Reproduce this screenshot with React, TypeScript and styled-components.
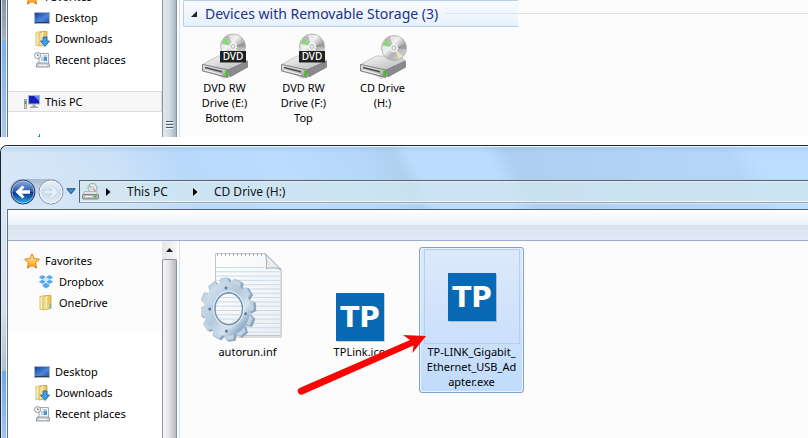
import React from "react";
import styled, { createGlobalStyle } from "styled-components";

const GlobalStyle = createGlobalStyle`
  * { box-sizing: border-box; }
  html, body, #root { margin: 0; height: 100%; }
  body {
    background: #fff;
    color: #000;
    font-family: "Noto Sans", "Open Sans", sans-serif;
    font-size: 11px;
    line-height: 15px;
    overflow: hidden;
  }
`;

const Screen = styled.div`
  display: flex;
  flex-direction: column;
  gap: 8px;
  min-height: 100%;
`;

const Pane = styled.section`
  display: flex;
  height: 137px;
  overflow: hidden;
`;

const Window = styled.section`
  display: flex;
  flex: 1;
  flex-direction: column;
  overflow: hidden;
  border-top: 1px solid #1b2430;
  border-left: 1px solid #1b2430;
  border-top-left-radius: 7px;
`;

const Body = styled.div`
  display: flex;
  flex: 1;
  min-height: 0;
`;

const GlassEdge = styled.div<{ $tone: "dark" | "light" }>`
  flex: none;
  width: ${(p) => (p.$tone === "dark" ? 7 : 6)}px;
  border-left: ${(p) => (p.$tone === "dark" ? "1px solid #1b2430" : "0")};
  box-shadow: inset 1px 0 #dcecfa, inset -1px 0 #e9f4fd;
  background: ${(p) =>
    p.$tone === "dark"
      ? "linear-gradient(#8794a3 0, #a4b1bf 40px, #7eb0ea 42px, #a9c8ec 100%)"
      : "linear-gradient(#d6e6f8 0, #d3dfec 100px, #b3bfcb 161px, #6fa5e8 163px, #a3c9f3 100%)"};
`;

const Client = styled.div`
  display: flex;
  flex: 1;
  min-width: 0;
  border-left: 1px solid #62717f;
`;

const Side = styled.nav<{ $end?: boolean }>`
  display: flex;
  flex: none;
  flex-direction: column;
  justify-content: ${(p) => (p.$end ? "flex-end" : "flex-start")};
  width: 154px;
  overflow: hidden;
  background: #fff;
`;

const SideGroup = styled.div<{ $shade?: boolean }>`
  display: flex;
  flex: none;
  flex-direction: column;
  padding: ${(p) => (p.$shade ? "9px 0 19px" : "0")};
  margin-bottom: ${(p) => (p.$shade ? 29 : 21)}px;
  background: ${(p) => (p.$shade ? "#fcfcfc" : "#fff")};
`;

const SideLink = styled.a<{ $indent: number; $current?: boolean }>`
  display: flex;
  flex: none;
  align-items: center;
  gap: 5px;
  height: 21px;
  padding-left: ${(p) => p.$indent}px;
  border: solid #dcdcdc;
  border-width: ${(p) => (p.$current ? "1px 1px 1px 0" : "0")};
  background: ${(p) => (p.$current ? "#f6f6f6" : "transparent")};
  color: #000;
  text-decoration: none;
  white-space: nowrap;
`;

const NextItem = styled.div`
  display: flex;
  flex: none;
  align-items: flex-end;
  height: 25px;
  padding-left: 28px;
`;

const Scroll = styled.div`
  display: flex;
  flex: none;
  flex-direction: column;
  width: 15px;
  background: #f0f0f0;
`;

const ScrollUp = styled.button`
  display: flex;
  align-items: center;
  justify-content: center;
  height: 18px;
  padding: 0;
  border: 0;
  background: linear-gradient(90deg, #e6e6e6, #f6f6f6);
`;

const Thumb = styled.div<{ $cut?: boolean }>`
  display: flex;
  flex: 1;
  align-items: flex-end;
  justify-content: center;
  padding-bottom: 7px;
  border: 1px solid #8a929b;
  border-width: ${(p) => (p.$cut ? "0 1px" : "1px 1px 0")};
  border-radius: ${(p) => (p.$cut ? "0" : "2px 2px 0 0")};
  background: ${(p) =>
    p.$cut
      ? "linear-gradient(90deg, #dfe8ee, #d2dce3 50%, #a9b5be)"
      : "linear-gradient(90deg, #f8f8f9, #e4e4e8 45%, #b9b9c1)"};
`;

const Main = styled.main`
  flex: 1;
  min-width: 0;
  margin-left: 2px;
  border-left: 1px solid #d3e1f1;
  background: #fcfcfc;
`;

const GroupHeader = styled.header`
  display: flex;
  align-items: center;
  margin-left: 3px;
`;

const GroupTitle = styled.h2`
  display: flex;
  align-items: center;
  gap: 8px;
  width: 335px;
  height: 27px;
  margin: 0;
  padding-left: 7px;
  border: solid #b4cfe8;
  border-width: 1px 0 1px 1px;
  border-radius: 2px 0 0 2px;
  background: linear-gradient(#f9fbfe, #f0f6fd 50%, #e6f1fc);
  color: #1e3287;
  font-size: 14px;
  font-weight: 400;
  line-height: 20px;
  white-space: nowrap;
`;

const Rule = styled.span`
  flex: 1;
  height: 1px;
  background: #dbe3ea;
`;

const DriveList = styled.div`
  display: flex;
  padding: 5px 0 0 5px;
`;

const Drive = styled.button`
  display: flex;
  flex-direction: column;
  align-items: center;
  width: 79px;
  padding: 0 10px;
  border: 0;
  background: none;
  color: #000;
  font: inherit;
`;

const TitleBar = styled.header`
  display: flex;
  flex: none;
  flex-direction: column;
  height: 63px;
  padding: 32px 0 6px 8px;
  border-top: 1px solid #eef7ff;
  background:
    linear-gradient(rgba(120, 165, 215, 0.25), rgba(255, 255, 255, 0) 6px),
    linear-gradient(62deg, #d9e8f8 0, #cde2f7 16%, #b9d9fa 24%, #bbdcfd 36%, #b5d7fa 46%, #b0d0ef 50%, #bbdcfd 52%, #bbdcfd 61%, #aecfef 64%, #b4d5f8 85%, #b4d5f8 90%, #bbddff 93%);
`;

const NavRow = styled.div`
  display: flex;
  align-items: center;
  height: 25px;
`;

const NavButtons = styled.div`
  display: flex;
  gap: 2px;
  height: 26px;
  padding-left: 1px;
  border-radius: 13px;
  background: linear-gradient(#a5bbd2, #d3e3f3 60%);
`;

const RoundButton = styled.button`
  display: flex;
  padding: 0;
  border: 0;
  background: none;
`;

const HistoryButton = styled(RoundButton)`
  margin: 0 3px 0 2px;
`;

const Address = styled.div`
  display: flex;
  flex: 1;
  align-items: center;
  height: 23px;
  padding-left: 2px;
  border: solid #53606c;
  border-width: 1px 0 1px 1px;
  border-bottom-color: #8fa0b0;
  background: rgba(211, 231, 239, 0.72);
  box-shadow: inset 0 1px #e2f1fa, inset 0 -1px #f3faff, 0 1px #d7e8f8;
`;

const Crumb = styled.button`
  padding: 0;
  border: 0;
  background: none;
  color: #101418;
  font: inherit;
  font-size: 12px;
  line-height: 20px;
`;

const CrumbArrow = styled.span<{ $before: number }>`
  display: flex;
  margin: 0 16px 0 ${(p) => p.$before}px;
`;

const CommandBar = styled.div`
  height: 32px;
  border-top: 1px solid #56646f;
  border-bottom: 1px solid #9badc8;
  background: linear-gradient(#fff, #e9f2fb 15px, #dbe5f2 15px, #dfe9f5 100%);
`;

const Column = styled.div`
  display: flex;
  flex: 1;
  flex-direction: column;
  min-width: 0;
`;

const Row = styled.div`
  display: flex;
  flex: 1;
  min-height: 0;
`;

const Files = styled.div`
  position: relative;
  display: flex;
  align-items: flex-start;
  gap: 8px;
  padding: 6px 0 0 15px;
`;

const File = styled.button<{ $selected?: boolean }>`
  display: flex;
  flex-direction: column;
  align-items: center;
  width: 105px;
  min-height: 146px;
  padding: 1px;
  border: 1px solid ${(p) => (p.$selected ? "#7da2ce" : "transparent")};
  border-radius: 3px;
  background: ${(p) => (p.$selected ? "linear-gradient(#dce9fb, #c1dbfc)" : "none")};
  box-shadow: ${(p) => (p.$selected ? "inset 0 0 0 1px #e9f2fd" : "none")};
  color: #000;
  font: inherit;

  & + & { margin-left: -1px; }
`;

const Preview = styled.span<{ $framed?: boolean }>`
  display: flex;
  align-items: ${(p) => (p.$framed ? "center" : "flex-end")};
  justify-content: center;
  width: 96px;
  height: 95px;
  padding-bottom: ${(p) => (p.$framed ? 0 : 1)}px;
  border: 1px solid ${(p) => (p.$framed ? "#b9cde8" : "transparent")};
`;

const Label = styled.span`
  white-space: pre-line;
  text-align: center;
`;

const Pointer = styled.svg`
  position: absolute;
  top: 88px;
  left: 114px;
  pointer-events: none;
`;

const Defs = styled.svg`
  position: absolute;
  width: 0;
  height: 0;
`;

const Gradients = () => (
  <Defs aria-hidden="true">
    <defs>
      <linearGradient id="screen" x1="0" y1="0" x2="1" y2="1">
        <stop offset="0" stopColor="#1a3f9c" />
        <stop offset=".6" stopColor="#4c86dc" />
        <stop offset="1" stopColor="#2a58b4" />
      </linearGradient>
      <linearGradient id="folder" x1="0" y1="0" x2="1" y2="0">
        <stop offset="0" stopColor="#f8e9a6" />
        <stop offset="1" stopColor="#dfbd55" />
      </linearGradient>
      <linearGradient id="star" x1="0" y1="0" x2="0" y2="1">
        <stop offset="0" stopColor="#fff3a0" />
        <stop offset="1" stopColor="#fb9a1d" />
      </linearGradient>
      <linearGradient id="metal" x1="0" y1="0" x2="1" y2="1">
        <stop offset="0" stopColor="#fafafa" />
        <stop offset="1" stopColor="#b4b4b6" />
      </linearGradient>
      <linearGradient id="front" x1="0" y1="0" x2="0" y2="1">
        <stop offset="0" stopColor="#ededef" />
        <stop offset="1" stopColor="#9a9a9e" />
      </linearGradient>
      <linearGradient id="disc" x1="0" y1="0" x2="1" y2="1">
        <stop offset="0" stopColor="#c9c9c9" />
        <stop offset=".4" stopColor="#f2f2f2" />
        <stop offset=".6" stopColor="#b2b2b2" />
        <stop offset="1" stopColor="#e3e3e3" />
      </linearGradient>
      <linearGradient id="paper" x1="0" y1="0" x2="1" y2="1">
        <stop offset="0" stopColor="#fff" />
        <stop offset="1" stopColor="#eceef1" />
      </linearGradient>
      <linearGradient id="gear" x1="0" y1="0" x2=".8" y2="1">
        <stop offset="0" stopColor="#dbe7f1" />
        <stop offset=".5" stopColor="#b3c9dc" />
        <stop offset=".75" stopColor="#d6e3ee" />
        <stop offset="1" stopColor="#6d93b5" />
      </linearGradient>
      <linearGradient id="back" x1="0" y1="0" x2="0" y2="1">
        <stop offset="0" stopColor="#8fb0e0" />
        <stop offset=".48" stopColor="#2c58ac" />
        <stop offset=".52" stopColor="#0d2f86" />
        <stop offset="1" stopColor="#2ab5f0" />
      </linearGradient>
      <linearGradient id="forward" x1="0" y1="0" x2="0" y2="1">
        <stop offset="0" stopColor="#eaf2fa" />
        <stop offset=".5" stopColor="#cfdeed" />
        <stop offset="1" stopColor="#dfeaf5" />
      </linearGradient>
    </defs>
  </Defs>
);

const StarIcon = () => (
  <svg width="16" height="16" viewBox="0 0 16 16">
    <path d="M8 .8l2.2 4.8 5.2.6-3.8 3.6 1 5.3L8 12.5l-4.6 2.6 1-5.3L.6 6.2l5.2-.6z" fill="url(#star)" stroke="#e07c1c" />
  </svg>
);

const DesktopIcon = () => (
  <svg width="16" height="16" viewBox="0 0 16 16">
    <rect x="0" y="2" width="16" height="12" fill="#a9b7c9" />
    <rect x="1" y="3" width="14" height="9" fill="url(#screen)" />
    <path d="M1 12.5h14" stroke="#2c3b50" />
    <path d="M1 13.5h2" stroke="#5dc3f0" />
  </svg>
);

const FolderShape = () => (
  <>
    <path d="M2 1.5l5-1v13l-5 1z" fill="#fbf1bd" stroke="#cfae52" strokeWidth=".8" />
    <path d="M5 2.5l3-2h5v13l-8 1.5z" fill="url(#folder)" stroke="#caa544" strokeWidth=".8" />
    <path d="M8.5 1v13" stroke="#fbf0bd" />
  </>
);

const DownloadsIcon = () => (
  <svg width="16" height="16" viewBox="0 0 16 16">
    <FolderShape />
    <path d="M9 6h4v4h2.6L11 15.5 6.4 10H9z" fill="#3ba0e6" stroke="#1767ae" strokeWidth=".8" />
  </svg>
);

const OneDriveIcon = () => (
  <svg width="16" height="16" viewBox="0 0 16 16">
    <FolderShape />
    <path d="M12.5 9v4" stroke="#69b5e8" strokeWidth="1.4" />
  </svg>
);

const RecentIcon = () => (
  <svg width="16" height="16" viewBox="0 0 16 16">
    <path d="M5 1.5h9.5v10H5z" fill="#f4f7fa" stroke="#a2a9b0" />
    <path d="M7 6h3M7 8h3M9 4h4" stroke="#8ea4ba" />
    <rect x="10" y="5" width="3" height="4" fill="#3e9ad6" />
    <path d="M3 11h12l.8 4H2z" fill="#c9cdd1" stroke="#8c9197" strokeWidth=".8" />
    <path d="M5 13.3h8" stroke="#fff" />
    <circle cx="3.6" cy="3.6" r="3" fill="#fff" stroke="#8d949b" />
    <path d="M3.6 1.8v2h1.6" fill="none" stroke="#4d5d70" strokeWidth=".8" />
  </svg>
);

const ComputerIcon = () => (
  <svg width="16" height="16" viewBox="0 0 16 16">
    <rect x=".5" y="5.5" width="2" height="9" fill="#d7dade" stroke="#8b9299" strokeWidth=".8" />
    <path d="M1.500 7v3" stroke="#35b52e" strokeWidth="1.4" />
    <rect x="4.5" y="1.5" width="11" height="8.5" fill="#1420bd" stroke="#aab2bd" />
    <path d="M10 2h5v5z" fill="#6a82ee" />
    <path d="M8.5 10.5h3v2H14v1.5H6v-1.500h2.500z" fill="#9fa8b2" />
  </svg>
);

const DropboxIcon = () => (
  <svg width="16" height="16" viewBox="0 0 16 16" fill="#56a8ec">
    <path d="M4.600 1L8 3.200 4.300 5.500.8 3.200zM11.400 1L8 3.200l3.700 2.300 3.500-2.300zM.8 7.800l3.500-2.300L8 7.800l-3.400 2.200zM15.200 7.800l-3.500-2.300L8 7.800l3.400 2.200zM4.600 10.800L8 8.700l3.400 2.100v1.400L8 14.500l-3.400-2.300z" />
    <path d="M4.300 5.500L8 3.200l3.700 2.300L8 7.800z" fill="#cfe7fb" />
  </svg>
);

const DriveIcon = ({ kind }: { kind: "DVD" | "CD" }) => {
  const cx = kind === "DVD" ? 32 : 35;
  const cy = kind === "DVD" ? 14.500 : 16;
  return (
    <svg width="48" height="48" viewBox="0 0 48 48">
      <path d="M3 37l20 10 24-11v-2z" fill="#000" opacity=".16" />
      <path d="M1.500 32.500L17 24h24l5.500 5L27 38z" fill="url(#metal)" stroke="#aaa" strokeWidth=".6" />
      <path d="M1.500 32.500L27 38v7.500L1.500 39z" fill="url(#front)" stroke="#6d6d70" strokeWidth=".8" />
      <path d="M27 38l19.500-9V35L29 45z" fill="#8b8b8f" stroke="#6d6d70" strokeWidth=".6" />
      <path d="M4 35.500l17 4.300" stroke="#4b4b50" strokeWidth="1.400" />
      <path d="M4 38l17 4.600" stroke="#f5f5f5" />
      <path d="M25.500 38.500v5.500" stroke="#3fc41c" strokeWidth="2.600" />
      <circle cx={cx} cy={cy} r="12.500" fill="url(#disc)" stroke="#9d9d9d" strokeWidth=".7" />
      <path d={`M${cx} ${cy}l-11.500-3 3-6z`} fill="#6ccf5a" opacity=".75" />
      <path d={`M${cx} ${cy}l-8.500-9 4-2.500z`} fill="#a8a8a8" opacity=".7" />
      <path d={`M${cx} ${cy}l11.500-4 .5 5z`} fill="#8d8d8d" opacity=".7" />
      <path d={`M${cx} ${cy}l9 8-4 3z`} fill="#f5e7b0" opacity=".8" />
      <circle cx={cx} cy={cy} r="3.600" fill="#d5d8da" stroke="#fff" />
      <circle cx={cx} cy={cy} r="1.500" fill="#fff" stroke="#9a9a9a" strokeWidth=".5" />
      {kind === "DVD" && (
        <>
          <rect x="19" y="19" width="26" height="11.500" fill="#202020" />
          <text x="32" y="28" textAnchor="middle" fill="#fff" fontFamily="Noto Sans, sans-serif" fontWeight="500" fontSize="10">
            DVD
          </text>
        </>
      )}
    </svg>
  );
};

const SmallDriveIcon = () => (
  <svg width="17" height="17" viewBox="0 0 17 17">
    <circle cx="10.500" cy="5" r="4.500" fill="#e3e6e8" stroke="#8d959c" strokeWidth=".8" />
    <path d="M10.500 5L6.500 4l1-2z" fill="#7ccf6a" />
    <path d="M10.500 5l3.500 2.500-1.500 1.500z" fill="#d98f86" />
    <circle cx="10.500" cy="5" r="1.200" fill="#fff" stroke="#8d959c" strokeWidth=".5" />
    <path d="M2.500 8.500h12l1.500 3H1z" fill="#e2e4e6" stroke="#9a9fa4" strokeWidth=".6" />
    <rect x=".5" y="11.500" width="16" height="4.500" rx="1" fill="#b9bdc1" stroke="#6c7277" strokeWidth=".8" />
    <path d="M3 13.500h7" stroke="#fff" />
    <path d="M12 13.500h2.500" stroke="#3fc41c" strokeWidth="2" />
  </svg>
);

const teeth = Array.from({ length: 12 }, (_, i) => i * 30);

const SettingsFileIcon = () => (
  <svg width="94" height="92" viewBox="0 0 94 92">
    <path d="M15 5h50l16 16v67H15z" fill="#000" opacity=".12" />
    <path d="M14.500 3.500H64l16 16v66H14.500z" fill="url(#paper)" stroke="#c2c6ca" />
    {Array.from({ length: 16 }, (_, i) => (
      <path key={i} d={`M15 ${17.500 + i * 4.300}h${i === 0 ? 48 : 64}`} stroke="#c7dbe9" />
    ))}
    <path d="M16 4.500h47" stroke="#8d9297" strokeDasharray="1 3" strokeWidth="2" />
    <path d="M64 3.500l16 16c-4-2-10-2-15-1 1-5 1-10-1-15z" fill="#e9ebed" stroke="#a6abb0" />
    <g transform="translate(28 60) scale(.86 1) rotate(-6)">
      {teeth.map((a) => (
        <path key={a} d="M-6-25l2-6h8l2 6z" transform={`rotate(${a})`} fill="#8aa8c2" stroke="#7d9bb5" strokeWidth=".8" />
      ))}
    </g>
    <g transform="translate(26 59) scale(.86 1) rotate(-6)">
      {teeth.map((a) => (
        <path key={a} d="M-6-25l2-6h8l2 6z" transform={`rotate(${a})`} fill="#c3d5e4" stroke="#a3bbd0" strokeWidth=".6" />
      ))}
      <path
        fillRule="evenodd"
        d="M0-27a27 27 0 1 1 0 54a27 27 0 1 1 0-54zM2-16a16 16 0 1 0 0 32a16 16 0 1 0 0-32z"
        fill="url(#gear)"
      />
      <circle cx="2" cy="0" r="16" fill="none" stroke="#7390ad" strokeWidth="1.600" />
      <circle cx="2" cy="0" r="17.500" fill="none" stroke="#e6eff6" />
      <g fill="#55789a">
        <circle cx="1" cy="-21" r="1.600" />
        <circle cx="21" cy="7" r="1.600" />
        <circle cx="-3" cy="22" r="1.600" />
        <circle cx="-20" cy="-2" r="1.600" />
      </g>
    </g>
  </svg>
);

const TpIcon = () => (
  <svg width="50" height="50" viewBox="0 0 50 50">
    <rect x="2" y="2" width="48" height="48" fill="#000" opacity=".18" />
    <rect x="1" y="1" width="48" height="48" fill="#0768b3" />
    <text x="25" y="35" textAnchor="middle" fill="#fff" fontFamily="DejaVu Sans, sans-serif" fontWeight="700" fontSize="28">
      TP
    </text>
  </svg>
);

const BackIcon = () => (
  <svg width="26" height="26" viewBox="0 0 26 26">
    <circle cx="13" cy="13" r="12" fill="url(#back)" stroke="#22385f" />
    <circle cx="13" cy="13" r="11" fill="none" stroke="#b5d0f2" opacity=".7" />
    <path d="M5.500 13l7-6.500 2 2-2.800 2.800H20v3.400h-8.300l2.800 2.800-2 2z" fill="#fff" />
  </svg>
);

const ForwardIcon = () => (
  <svg width="26" height="26" viewBox="0 0 26 26">
    <circle cx="13" cy="13" r="12" fill="url(#forward)" stroke="#7f91a6" />
    <circle cx="13" cy="13" r="11" fill="none" stroke="#f5faff" />
    <path d="M20.500 13l-7-6.500-2 2 2.800 2.800H6v3.400h8.300l-2.800 2.800 2 2z" fill="#e8f0f8" stroke="#bccddd" strokeWidth=".7" />
  </svg>
);

const HistoryIcon = () => (
  <svg width="10" height="7" viewBox="0 0 10 7">
    <path d="M.8.8h8.400L5 5.800z" fill="#3b9bd9" stroke="#17446e" />
  </svg>
);

const RightArrow = () => (
  <svg width="5" height="8" viewBox="0 0 5 8">
    <path d="M0 0l4.500 4L0 8z" fill="#000" />
  </svg>
);

const Places = () => (
  <>
    <SideLink href="#desktop" $indent={26}><DesktopIcon />Desktop</SideLink>
    <SideLink href="#downloads" $indent={26}><DownloadsIcon />Downloads</SideLink>
    <SideLink href="#recent" $indent={26}><RecentIcon />Recent places</SideLink>
  </>
);

const drives: { kind: "DVD" | "CD"; label: string }[] = [
  { kind: "DVD", label: "DVD RW\nDrive (E:)\nBottom" },
  { kind: "DVD", label: "DVD RW\nDrive (F:)\nTop" },
  { kind: "CD", label: "CD Drive\n(H:)" },
];

const ComputerPane = () => (
  <Pane aria-label="This PC">
    <GlassEdge $tone="dark" />
    <Client>
      <Side $end aria-label="Places">
        <SideGroup>
          <SideLink href="#favorites" $indent={16}><StarIcon />Favorites</SideLink>
          <Places />
        </SideGroup>
        <SideLink href="#this-pc" $indent={16} $current aria-current="page"><ComputerIcon />This PC</SideLink>
        <NextItem>
          <svg width="8" height="3" viewBox="0 0 8 3"><path d="M1 3l2-1V0h1v3z" fill="#1f9a63" /></svg>
        </NextItem>
      </Side>
      <Scroll>
        <Thumb $cut>
          <svg width="7" height="9" viewBox="0 0 7 9">
            <path d="M0 .5h7M0 3.500h7M0 6.500h7" stroke="#4d5860" />
            <path d="M0 1.500h7M0 4.500h7M0 7.500h7" stroke="#f4f8fa" />
          </svg>
        </Thumb>
      </Scroll>
      <Main>
        <GroupHeader>
          <GroupTitle>
            <svg width="6" height="6" viewBox="0 0 6 6"><path d="M6 0v6H0z" fill="#222" /></svg>
            Devices with Removable Storage (3)
            <Rule />
          </GroupTitle>
          <Rule />
        </GroupHeader>
        <DriveList>
          {drives.map((d) => (
            <Drive key={d.label}>
              <DriveIcon kind={d.kind} />
              <Label>{d.label}</Label>
            </Drive>
          ))}
        </DriveList>
      </Main>
    </Client>
  </Pane>
);

const DriveWindow = () => (
  <Window aria-label="CD Drive (H:)">
    <TitleBar>
      <NavRow>
        <NavButtons>
          <RoundButton aria-label="Back"><BackIcon /></RoundButton>
          <RoundButton aria-label="Forward"><ForwardIcon /></RoundButton>
        </NavButtons>
        <HistoryButton aria-label="Recent locations"><HistoryIcon /></HistoryButton>
        <Address>
          <SmallDriveIcon />
          <CrumbArrow $before={7}><RightArrow /></CrumbArrow>
          <Crumb>This PC</Crumb>
          <CrumbArrow $before={25}><RightArrow /></CrumbArrow>
          <Crumb>CD Drive (H:)</Crumb>
        </Address>
      </NavRow>
    </TitleBar>
    <Body>
      <GlassEdge $tone="light" />
      <Client>
        <Column>
          <CommandBar />
          <Row>
            <Side aria-label="Places">
              <SideGroup $shade>
                <SideLink href="#favorites" $indent={16}><StarIcon />Favorites</SideLink>
                <SideLink href="#dropbox" $indent={30}><DropboxIcon />Dropbox</SideLink>
                <SideLink href="#onedrive" $indent={30}><OneDriveIcon />OneDrive</SideLink>
              </SideGroup>
              <SideGroup>
                <Places />
              </SideGroup>
            </Side>
            <Scroll>
              <ScrollUp aria-label="Scroll up">
                <svg width="7" height="4" viewBox="0 0 7 4"><path d="M0 4l3.500-4L7 4z" fill="#222" /></svg>
              </ScrollUp>
              <Thumb />
            </Scroll>
            <Main>
              <Files>
                <File>
                  <Preview><SettingsFileIcon /></Preview>
                  <Label>autorun.inf</Label>
                </File>
                <File>
                  <Preview><TpIcon /></Preview>
                  <Label>TPLink.ico</Label>
                </File>
                <File $selected>
                  <Preview $framed><TpIcon /></Preview>
                  <Label>{"TP-LINK_Gigabit_\nEthernet_USB_Ad\napter.exe"}</Label>
                </File>
                <Pointer width="136" height="70" viewBox="0 0 136 70" aria-hidden="true">
                  <path d="M5.500 59L116 11l-7-5 23 1-13.500 17 1-7.500L8.500 65.500a3.600 3.600 0 0 1-3-6.500z" fill="#f80505" />
                </Pointer>
              </Files>
            </Main>
          </Row>
        </Column>
      </Client>
    </Body>
  </Window>
);

export default function App() {
  return (
    <Screen>
      <GlobalStyle />
      <Gradients />
      <ComputerPane />
      <DriveWindow />
    </Screen>
  );
}
